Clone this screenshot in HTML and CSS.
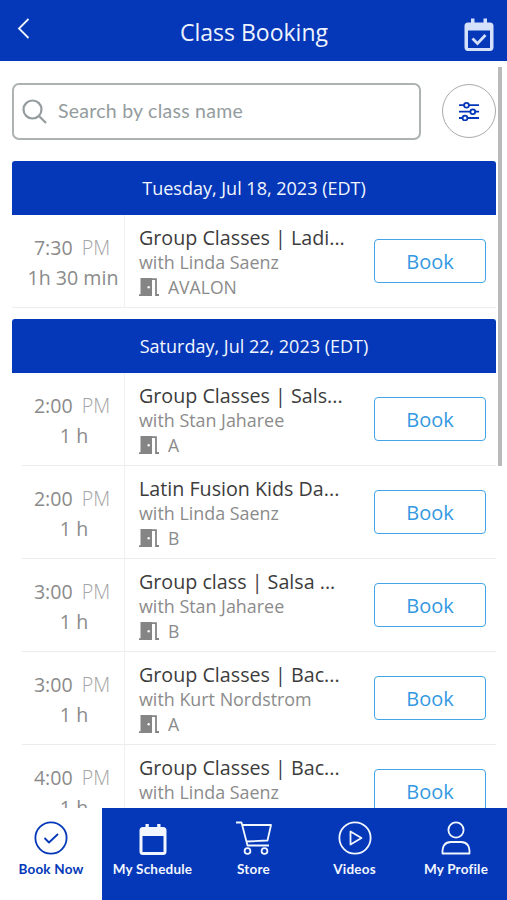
FILE: index.html
```
<!DOCTYPE html>
<html lang="en">
<head>
  <meta charset="utf-8">
  <title>Class Booking</title>
  <link rel="stylesheet" href="styles.css">
</head>
<body>
  <svg class="defs">
    <symbol id="door" viewBox="0 0 20 18">
      <path d="M1.500 0H13V18H0V16.300H1.500Z" fill="#858585"/>
      <path d="M13 1.200H17V17H20" fill="none" stroke="#858585" stroke-width="1.800"/>
      <circle cx="9.700" cy="9.300" r="1.200" fill="#fff"/>
    </symbol>
  </svg>

  <header class="topbar">
    <svg class="back" width="14" height="22" viewBox="0 0 14 22"><path d="M12.500 1L3 10.500L12.500 20"/></svg>
    <h1>Class Booking</h1>
    <svg class="calendar" width="30" height="34" viewBox="0 0 30 34">
      <path d="M4 4.500H26Q29.500 4.500 29.500 8V29Q29.500 33 26 33H4Q0.500 33 0.500 29V8Q0.500 4.500 4 4.500ZM4 12.500V30H26V12.500Z" fill-rule="evenodd"/>
      <path d="M7 0.500H10.500V6H7ZM19.500 0.500H23V6H19.500Z"/>
      <path class="check" d="M8.500 20.500L13.500 25.500L21.500 17"/>
    </svg>
  </header>

  <main class="content">
    <div class="search-row">
      <div class="search">
        <svg width="26" height="26" viewBox="0 0 26 26"><circle cx="10.500" cy="10.500" r="9"/><path d="M17 17L24 24"/></svg>
        <span>Search by class name</span>
      </div>
      <div class="filter">
        <svg width="20" height="20" viewBox="0 0 20 20">
          <path d="M0 4.200H20M0 10.700H20M0 17H20"/>
          <circle cx="7.500" cy="4.200" r="2.400"/><circle cx="13.800" cy="10.700" r="2.400"/><circle cx="6" cy="17" r="2.400"/>
        </svg>
      </div>
    </div>

    <section class="day">
      <h2>Tuesday, Jul 18, 2023 (EDT)</h2>
      <div class="class-row last">
        <div class="time"><div>7:30 <span class="ampm">PM</span></div><div class="long">1h 30 min</div></div>
        <div class="info">
          <div class="name">Group Classes | Ladi...</div>
          <div class="teacher">with Linda Saenz</div>
          <div class="room"><svg><use href="#door"/></svg>AVALON</div>
        </div>
        <div class="book">Book</div>
      </div>
    </section>

    <section class="day">
      <h2>Saturday, Jul 22, 2023 (EDT)</h2>
      <div class="class-row">
        <div class="time"><div>2:00 <span class="ampm">PM</span></div><div>1 h</div></div>
        <div class="info">
          <div class="name">Group Classes | Sals...</div>
          <div class="teacher">with Stan Jaharee</div>
          <div class="room"><svg><use href="#door"/></svg>A</div>
        </div>
        <div class="book">Book</div>
      </div>
      <div class="class-row">
        <div class="time"><div>2:00 <span class="ampm">PM</span></div><div>1 h</div></div>
        <div class="info">
          <div class="name">Latin Fusion Kids Da...</div>
          <div class="teacher">with Linda Saenz</div>
          <div class="room"><svg><use href="#door"/></svg>B</div>
        </div>
        <div class="book">Book</div>
      </div>
      <div class="class-row">
        <div class="time"><div>3:00 <span class="ampm">PM</span></div><div>1 h</div></div>
        <div class="info">
          <div class="name">Group class | Salsa ...</div>
          <div class="teacher">with Stan Jaharee</div>
          <div class="room"><svg><use href="#door"/></svg>B</div>
        </div>
        <div class="book">Book</div>
      </div>
      <div class="class-row">
        <div class="time"><div>3:00 <span class="ampm">PM</span></div><div>1 h</div></div>
        <div class="info">
          <div class="name">Group Classes | Bac...</div>
          <div class="teacher">with Kurt Nordstrom</div>
          <div class="room"><svg><use href="#door"/></svg>A</div>
        </div>
        <div class="book">Book</div>
      </div>
      <div class="class-row">
        <div class="time"><div>4:00 <span class="ampm">PM</span></div><div>1 h</div></div>
        <div class="info">
          <div class="name">Group Classes | Bac...</div>
          <div class="teacher">with Linda Saenz</div>
        </div>
        <div class="book">Book</div>
      </div>
    </section>
    <div class="scrollbar"></div>
  </main>

  <nav class="tabs">
    <div class="tab active">
      <svg viewBox="0 0 38 34"><circle cx="19" cy="17" r="15.600"/><path d="M12.500 17L17 21.500L26 13"/></svg>
      <span>Book Now</span>
    </div>
    <div class="tab">
      <svg viewBox="0 0 38 34">
        <path class="solid" d="M9 6H29Q32.500 6 32.500 9.500V30.500Q32.500 34 29 34H9Q5.500 34 5.500 30.500V9.500Q5.500 6 9 6ZM8.500 15V31H29.500V15Z"/>
        <path class="solid" d="M11.500 3H14.800V8H11.500ZM23.200 3H26.500V8H23.200Z"/>
      </svg>
      <span>My Schedule</span>
    </div>
    <div class="tab">
      <svg viewBox="0 0 38 34">
        <path d="M1 1.500H6.500L12.500 24.500H34M7.500 4H36L32.500 19.500L11.500 20.500"/>
        <circle cx="12.500" cy="30" r="2.900"/><circle cx="29.500" cy="30" r="2.900"/>
      </svg>
      <span>Store</span>
    </div>
    <div class="tab">
      <svg viewBox="0 0 38 34"><circle cx="19" cy="17" r="15.600"/><path d="M14.500 10.500V23.500L25.500 17Z"/></svg>
      <span>Videos</span>
    </div>
    <div class="tab">
      <svg viewBox="0 0 38 34"><circle cx="19" cy="9" r="7.600"/><path d="M5.500 32.500Q5 21 14 21H24Q33 21 32.500 32.500Z"/></svg>
      <span>My Profile</span>
    </div>
  </nav>
</body>
</html>
```

FILE: styles.css
```
* {
  box-sizing: border-box;
}

body {
  margin: 0;
  height: 900px;
  display: flex;
  flex-direction: column;
  overflow: hidden;
  background-color: #fff;
  font-family: "Open Sans", "Noto Sans", sans-serif;
}

.defs {
  position: absolute;
  width: 0;
  height: 0;
}

.topbar {
  flex: none;
  height: 61px;
  display: flex;
  justify-content: space-between;
  padding: 18px 13px 0 16px;
  background-color: #0438b8;
}

.topbar h1 {
  margin: 0 0 0 14px;
  color: #eef3ff;
  font-size: 23px;
  font-weight: 400;
  line-height: 28px;
}

.back {
  fill: none;
  stroke: #eef3ff;
  stroke-width: 1.8;
}

.calendar {
  fill: #d5e0fa;
}

.calendar .check {
  fill: none;
  stroke: #d5e0fa;
  stroke-width: 2.8;
}

.content {
  flex: 1;
  min-height: 0;
  position: relative;
  overflow: hidden;
  padding: 22px 11px 0 12px;
}

.search-row {
  display: flex;
  justify-content: space-between;
  margin-bottom: 21px;
}

.search {
  width: 409px;
  height: 57px;
  display: flex;
  align-items: center;
  padding-left: 8px;
  border: 2px solid #adb2b2;
  border-radius: 7px;
  color: #949c9e;
  font-family: Lato, sans-serif;
  font-size: 19.5px;
  letter-spacing: 0.25px;
}

.search span {
  padding-bottom: 2px;
}

.search svg {
  margin-right: 10px;
  fill: none;
  stroke: #949c9e;
  stroke-width: 2.2;
}

.filter {
  width: 54px;
  height: 54px;
  margin-top: 1px;
  display: flex;
  align-items: center;
  justify-content: center;
  border: 1.5px solid #aaa;
  border-radius: 50%;
}

.filter svg {
  fill: #fff;
  stroke: #0438b8;
  stroke-width: 1.8;
}

.day {
  margin-bottom: 11px;
}

.day h2 {
  margin: 0;
  height: 54px;
  border-radius: 3px 3px 0 0;
  background-color: #0438b8;
  color: #f2f6ff;
  font-size: 18px;
  font-weight: 400;
  line-height: 54px;
  text-align: center;
}

.class-row {
  height: 93px;
  display: flex;
  background: linear-gradient(#ececec, #ececec) 10px 100% / 100% 1px no-repeat;
}

.class-row.last {
  background-position: 0 100%;
}

.time {
  width: 113px;
  padding: 18px 0 0 8px;
  border-right: 1px solid #f0f2f2;
  color: #8b8b8b;
  font-size: 19.6px;
  line-height: 30px;
  text-align: center;
  white-space: nowrap;
}

.ampm {
  margin-left: 4px;
  color: #a5a5a5;
  font-weight: 300;
}

.time div + div {
  padding-left: 4px;
}

.time .long {
  padding-left: 0;
  margin-right: -2px;
}

.info {
  flex: 1;
  padding: 10px 0 0 14px;
  color: #8b8b8b;
  font-size: 17.9px;
  line-height: 25px;
  white-space: nowrap;
}

.name {
  color: #3c3c3c;
  font-size: 19.7px;
}

.room {
  display: flex;
  align-items: center;
  font-size: 17.6px;
  line-height: 24px;
}

.room svg {
  width: 20px;
  height: 18px;
  margin-right: 9px;
}

.book {
  width: 112px;
  height: 44px;
  margin: 24px 10px 0 0;
  border: 1.5px solid #42a5e8;
  border-radius: 4px;
  color: #3499e2;
  font-size: 20px;
  line-height: 43px;
  text-align: center;
}

.scrollbar {
  position: absolute;
  top: 6px;
  right: 5px;
  width: 4px;
  height: 399px;
  background-color: #bababa;
}

.tabs {
  flex: none;
  height: 92px;
  display: grid;
  grid-template-columns: 102px 101px 101px 101px 102px;
  background-color: #0438b8;
}

.tab {
  display: flex;
  flex-direction: column;
  align-items: center;
  padding-top: 13px;
  color: #f2f6ff;
  font-family: Lato, sans-serif;
  font-size: 13.5px;
  font-weight: 700;
  letter-spacing: 0.2px;
  line-height: 18px;
}

.tab svg {
  width: 38px;
  height: 34px;
  margin-bottom: 5px;
  fill: none;
  stroke: currentColor;
  stroke-width: 1.8;
  stroke-linejoin: round;
}

.tab .solid {
  fill: currentColor;
  fill-rule: evenodd;
  stroke: none;
}

.tab.active {
  background-color: #fff;
  color: #0438b8;
}
```
